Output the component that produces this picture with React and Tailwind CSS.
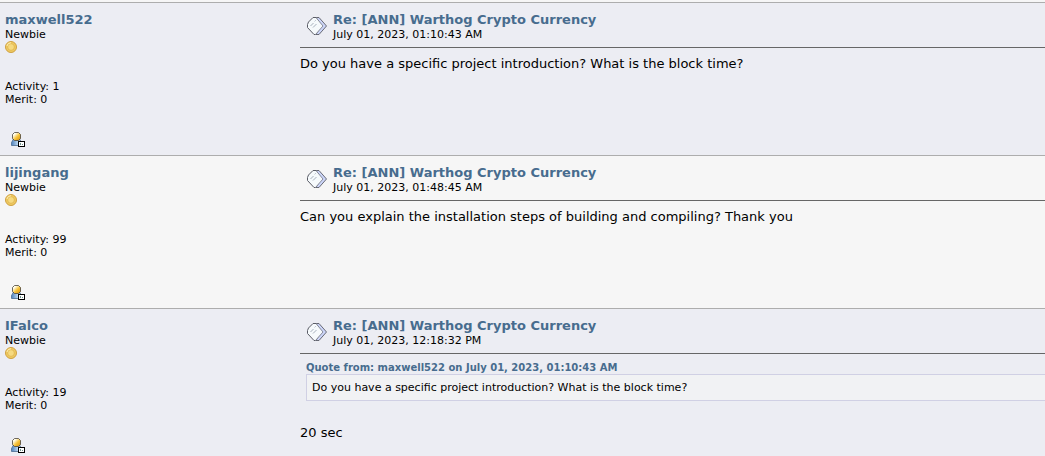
import React from 'react';

const TITLE = 'Re: [ANN] Warthog Crypto Currency';

const posts = [
    {
        id: 1,
        author: 'maxwell522',
        activity: 1,
        date: 'July 01, 2023, 01:10:43 AM',
        body: 'Do you have a specific project introduction? What is the block time?',
    },
    {
        id: 2,
        author: 'lijingang',
        activity: 99,
        date: 'July 01, 2023, 01:48:45 AM',
        body: 'Can you explain the installation steps of building and compiling? Thank you',
    },
    {
        id: 3,
        author: 'IFalco',
        activity: 19,
        date: 'July 01, 2023, 12:18:32 PM',
        quote: {
            header: 'Quote from: maxwell522 on July 01, 2023, 01:10:43 AM',
            text: 'Do you have a specific project introduction? What is the block time?',
        },
        body: '20 sec',
    },
];

function CoinIcon() {
    return (
        <svg className="block" width="12" height="12" viewBox="0 0 12 12" aria-hidden="true">
            <circle cx="6" cy="6" r="5.5" fill="#efcb60" stroke="#cfa043" />
            <circle cx="6" cy="6" r="3.4" fill="#f6da80" stroke="#deb24c" strokeWidth="0.8" />
            <path d="M1.9 5A4.3 4.3 0 0 1 6 1.7" fill="none" stroke="#fdf0b4" />
        </svg>
    );
}

function ProfileIcon() {
    return (
        <svg className="block" width="15" height="16" viewBox="0 0 15 16" aria-hidden="true">
            <defs>
                <linearGradient id="head" x1="0" y1="0" x2="1" y2="1">
                    <stop offset="0.25" stopColor="#fffbe6" />
                    <stop offset="0.55" stopColor="#f8c53c" />
                    <stop offset="1" stopColor="#d08a06" />
                </linearGradient>
                <linearGradient id="torso" x1="0" y1="0" x2="1" y2="0">
                    <stop offset="0" stopColor="#4f81bb" />
                    <stop offset="0.6" stopColor="#b4d2ee" />
                    <stop offset="1" stopColor="#7fa9d4" />
                </linearGradient>
            </defs>
            <path d="M.5 13.5v-3L2.5 7h6l2 3.500v3z" fill="url(#torso)" stroke="#4a6c90" strokeWidth="0.8" />
            <path d="M3.5.5h4l2 2v4l-2 2h-4l-2-2v-4z" fill="url(#head)" stroke="#4a443a" strokeWidth="0.8" />
            <rect x="7.500" y="9.500" width="6" height="5" fill="#fff" stroke="#000" />
            <path d="M9 11h1v2H9zM11 12h1v1h-1z" fill="#6b8f88" shapeRendering="crispEdges" />
        </svg>
    );
}

function MessageIcon() {
    return (
        <svg className="block shrink-0" width="20" height="20" viewBox="0 0 20 20" aria-hidden="true">
            <path d="M9 1.500h3L19.500 10 12 18.500H9L14 10z" fill="#cdd6fa" stroke="#5a5c66" strokeWidth="0.9" />
            <path d="M.5 8.500 1.500 6 6 1.500h3L16 10 8.500 18.500H7L.5 11.500z" fill="#f6fafc" />
            <path d="M9 1.500 16 10 8.500 18.500" fill="none" stroke="#7d818e" strokeWidth="0.9" />
            <path d="M9 1.500H6L1.500 6 .5 8.500v3L7 18.500h1.500" fill="none" stroke="#5a5c66" />
            <path d="M3.500 10 6.500 7M6 11.500 9.500 8" fill="none" stroke="#929dab" strokeWidth="0.8" />
            <path d="M7.500 5.500 9 4" fill="none" stroke="#b5bdc8" strokeWidth="0.8" />
        </svg>
    );
}

function PosterInfo({ post }) {
    return (
        <div className="w-[300px] shrink-0 pl-[5px] text-[11px] leading-[13px]">
            <a href="#profile" className="block text-[13px] leading-4 font-bold text-[#476c8e]">{post.author}</a>
            <p>Newbie</p>
            <CoinIcon />
            <p className="mt-[27px]">Activity: {post.activity}</p>
            <p>Merit: 0</p>
            <a href="#profile" aria-label={`View profile of ${post.author}`} className="mt-[26px] ml-1.5 block w-fit">
                <ProfileIcon />
            </a>
        </div>
    );
}

function Quote({ quote }) {
    return (
        <div className="mb-6 ml-1.5 -mt-px">
            <a href="#quoted" className="block text-[10px] leading-[13px] font-bold text-[#476c8e]">{quote.header}</a>
            <blockquote className="border border-r-0 border-[#d0d0e4] bg-[#f1f2f4] px-[5px] py-1.5 text-[11px] leading-[13px]">
                {quote.text}
            </blockquote>
        </div>
    );
}

function Post({ post }) {
    return (
        <article className="flex border-t border-[#adadad] bg-[#ecedf3] pt-[9px] pb-[7px] even:bg-[#f6f6f6]">
            <PosterInfo post={post} />
            <div className="min-w-0 flex-1">
                <header className="flex gap-1.5 border-b border-[#666666] pb-1.5 pl-[7px]">
                    <div className="pt-1">
                        <MessageIcon />
                    </div>
                    <div>
                        <a href="#msg" className="block text-[13px] leading-4 font-bold text-[#476c8e]">{TITLE}</a>
                        <p className="text-[11px] leading-[13px]">{post.date}</p>
                    </div>
                </header>
                <div className="pt-2 text-[13px] leading-4">
                    {post.quote && <Quote quote={post.quote} />}
                    <p>{post.body}</p>
                </div>
            </div>
        </article>
    );
}

export default function App() {
    return (
        <main className="h-screen overflow-hidden bg-[#f6f6f6] pt-0.5 font-['Verdana','DejaVu_Sans',sans-serif] text-black">
            <div>
                {posts.map(post => (
                    <Post key={post.id} post={post} />
                ))}
            </div>
        </main>
    );
}
